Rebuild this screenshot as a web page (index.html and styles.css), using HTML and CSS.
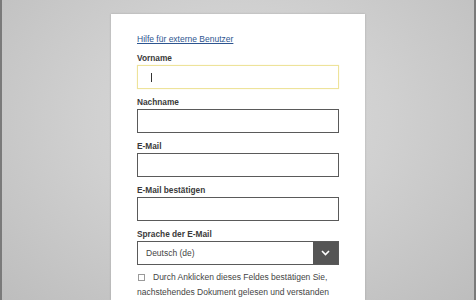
FILE: index.html
```html
<!DOCTYPE html>
<html lang="de">
<head>
  <meta charset="UTF-8" />
  <title>Registrierung</title>
  <link rel="stylesheet" href="styles.css">
</head>
<body>
  <div class="card">
    <a class="help-link" href="#">Hilfe für externe Benutzer</a>

    <div class="field">
      <label class="label" for="vorname">Vorname</label>
      <div class="input-wrap">
        <input class="input input-focus" id="vorname" type="text">
        <span class="caret"></span>
      </div>
    </div>

    <div class="field">
      <label class="label" for="nachname">Nachname</label>
      <input class="input" id="nachname" type="text">
    </div>

    <div class="field">
      <label class="label" for="email">E-Mail</label>
      <input class="input" id="email" type="text">
    </div>

    <div class="field">
      <label class="label" for="email2">E-Mail bestätigen</label>
      <input class="input" id="email2" type="text">
    </div>

    <div class="field">
      <label class="label">Sprache der E-Mail</label>
      <div class="select">
        <span class="select-value">Deutsch (de)</span>
        <span class="select-btn">
          <svg width="9" height="6" viewBox="0 0 9 6"><path d="M1 1l3.5 3.5L8 1" fill="none" stroke="#fff" stroke-width="1.6"/></svg>
        </span>
      </div>
    </div>

    <p class="consent">
      <span class="checkbox"></span>Durch Anklicken dieses Feldes bestätigen Sie, nachstehendes Dokument gelesen und verstanden
    </p>
  </div>
</body>
</html>
```

FILE: styles.css
```css
* {
  margin: 0;
  padding: 0;
  box-sizing: border-box;
}

body {
  height: 300px;
  overflow: hidden;
  font-family: "Liberation Sans", Arial, sans-serif;
  background: radial-gradient(ellipse at 50% 40%, #dcdcdc 0%, #d0d0d0 45%, #bdbdbd 100%);
  border-left: 2px solid #7a7a7a;
  border-right: 2px solid #7a7a7a;
  display: flex;
  justify-content: center;
}

.card {
  width: 254px;
  margin-top: 14px;
  background: #fff;
  padding: 19px 26px 0 26px;
  box-shadow: 0 0 2px rgba(0, 0, 0, 0.18);
}

.help-link,
.help-link:visited {
  display: block;
  font-size: 8.5px;
  line-height: 12px;
  color: #2d5590;
  text-decoration: underline;
  margin-bottom: 7px;
}

.field {
  display: flex;
  flex-direction: column;
  gap: 1px;
  margin-bottom: 7px;
}

.label {
  font-size: 8.3px;
  line-height: 12px;
  font-weight: bold;
  color: #3a3a3a;
}

.input {
  display: block;
  width: 100%;
  height: 24px;
  border: 1px solid #5a5a5a;
  background: #fff;
  outline: none;
}

.input-wrap {
  position: relative;
}

.input-focus {
  border-color: #eee39a;
  box-shadow: 0 0 1px #f3ecc0;
}

.caret {
  position: absolute;
  left: 14px;
  top: 8px;
  width: 1px;
  height: 9px;
  background: #333;
}

.select {
  display: flex;
  height: 24px;
  border: 1px solid #5a5a5a;
}

.select-value {
  flex: 1;
  padding-left: 8px;
  font-size: 8.5px;
  line-height: 22px;
  color: #444;
}

.select-btn {
  width: 25px;
  background: #555;
  display: flex;
  align-items: center;
  justify-content: center;
}

.consent {
  margin-top: -2px;
  font-size: 8.5px;
  line-height: 15px;
  color: #444;
}

.checkbox {
  display: inline-block;
  width: 7px;
  height: 7px;
  border: 1px solid #9a9a9a;
  margin: 0 8px 0 1px;
  vertical-align: -0.5px;
}
```
